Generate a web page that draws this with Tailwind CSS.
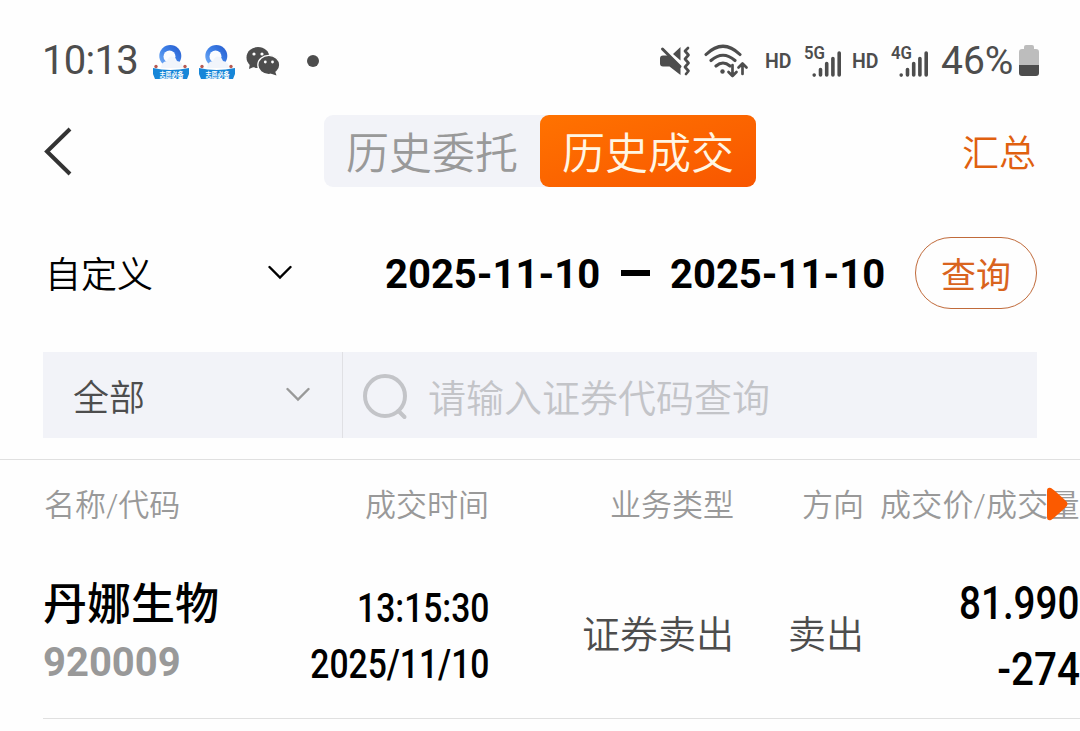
<!DOCTYPE html>
<html lang="zh-CN">
<head>
    <meta charset="UTF-8">
    <meta name="viewport" content="width=device-width, initial-scale=1.0">
    <title>历史成交</title>
    <script src="https://cdn.jsdelivr.net/npm/@tailwindcss/browser@4"></script>
</head>
<body class="w-[1080px] h-[731px] overflow-hidden bg-[#fefefe] text-black whitespace-nowrap font-[Roboto,'Noto_Sans_CJK_SC',sans-serif]">
    <!-- Status bar -->
    <div class="flex h-[100px] pt-[32px] text-[#4d4d4d]">
        <span class="ml-[42px] w-[110px] h-[56px] text-[40px] leading-[58px] tracking-[-0.7px]">10:13</span>
        <svg class="mt-[10px] w-[38px] h-[40px] shrink-0" viewBox="0 0 38 40">
            <defs>
                <linearGradient id="ring" x1="0" y1="1" x2="1" y2="0">
                    <stop offset="0" stop-color="#7db4f7"/>
                    <stop offset=".5" stop-color="#3f82e8"/>
                    <stop offset="1" stop-color="#2459cc"/>
                </linearGradient>
            </defs>
            <circle cx="18.300" cy="14" r="11" fill="url(#ring)"/>
            <circle cx="17.500" cy="14.500" r="6" fill="#fafcff"/>
            <path d="M9 26q0-6 6-7 2-6 7-4 2 1 3 4 6 1 6 7z" fill="#f1f5fb"/>
            <path d="M1 26q17 4 36 0v6l-2 5H3l-2-5z" fill="#1786d8"/>
            <circle cx="4" cy="24.500" r="1.700" fill="#b75a52"/>
            <circle cx="33" cy="24.500" r="1.700" fill="#b75a52"/>
            <text x="7.500" y="35.500" font-size="7.500" font-weight="700" fill="#fff" textLength="24" lengthAdjust="spacingAndGlyphs">志愿必备</text>
        </svg>
        <svg class="ml-[8px] mt-[10px] w-[38px] h-[40px] shrink-0" viewBox="0 0 38 40">
            <circle cx="18.300" cy="14" r="11" fill="url(#ring)"/>
            <circle cx="17.500" cy="14.500" r="6" fill="#fafcff"/>
            <path d="M9 26q0-6 6-7 2-6 7-4 2 1 3 4 6 1 6 7z" fill="#f1f5fb"/>
            <path d="M1 26q17 4 36 0v6l-2 5H3l-2-5z" fill="#1786d8"/>
            <circle cx="4" cy="24.500" r="1.700" fill="#b75a52"/>
            <circle cx="33" cy="24.500" r="1.700" fill="#b75a52"/>
            <text x="7.500" y="35.500" font-size="7.500" font-weight="700" fill="#fff" textLength="24" lengthAdjust="spacingAndGlyphs">志愿必备</text>
        </svg>
        <svg class="ml-[10px] mt-[14px] w-[34px] h-[31px] shrink-0" viewBox="0 0 34 31">
            <ellipse cx="12" cy="11.500" rx="11.500" ry="10.500" fill="#4d4d4d"/>
            <path d="M4 17l-1 6 7-3z" fill="#4d4d4d"/>
            <ellipse cx="22.800" cy="19" rx="11" ry="9.700" fill="#4d4d4d" stroke="#fefefe" stroke-width="1.300"/>
            <path d="M29 25l1.500 4.500-6-2z" fill="#4d4d4d"/>
            <circle cx="8" cy="8" r="1.600" fill="#fff"/><circle cx="16" cy="8" r="1.600" fill="#fff"/>
            <circle cx="19.300" cy="16" r="1.400" fill="#fff"/><circle cx="26.500" cy="16" r="1.400" fill="#fff"/>
        </svg>
        <span class="ml-[27px] mt-[23px] size-[12px] rounded-full bg-[#4d4d4d]"></span>

        <!-- Mute -->
        <svg class="ml-[341px] mt-[14px] w-[31px] h-[30px] shrink-0" viewBox="0 0 31 30" fill="#4d4d4d">
            <path d="M3 9.500H9L20.500 20v9L9.500 20.500H3q-3 0-3-3v-5q0-3 3-3zM13 8L20.500 1v13.500z"/>
            <path d="M2.500 3L20 20.500" fill="none" stroke="#4d4d4d" stroke-width="3" stroke-linecap="round"/>
            <path d="M28 2l-3 3 3.500 4-3.500 4 3.500 4-3.500 4 3.500 4-2.500 3" fill="none" stroke="#4d4d4d" stroke-width="2.700" stroke-linecap="round" stroke-linejoin="round"/>
        </svg>
        <!-- Wi-Fi -->
        <svg class="ml-[13px] mt-[11px] w-[45px] h-[35px] shrink-0" viewBox="0 0 45 35" fill="none" stroke="#4d4d4d" stroke-width="3.100" stroke-linecap="round" stroke-linejoin="round">
            <path d="M2 11.500Q19-5 36 11.500M7 17.500q12-10.500 24 0M12 23q7-6 14 0"/>
            <circle cx="18.500" cy="28.500" r="2.200" fill="#4d4d4d" stroke="none"/>
            <path d="M28.500 22v11m-4-4l4 4 4-4M38.500 31V20.500m-4 4l4-4 4 4" stroke-width="2.700"/>
        </svg>
        <span class="ml-[16px] mt-[17px] w-[39px] text-[19.500px] leading-[25px] font-semibold">HD</span>
        <svg class="mt-[10px] w-[38px] h-[36px] shrink-0" viewBox="0 0 38 36" stroke="#4d4d4d" stroke-width="3.600" stroke-linecap="round">
            <text x="0" y="16.500" font-size="18" font-weight="600" fill="#4d4d4d" stroke="none" textLength="21" lengthAdjust="spacingAndGlyphs">5G</text>
            <path d="M10.200 33v.1M16.500 27.500V33M22.700 21.500V33M28.900 16.500V33M35.200 11v22"/>
        </svg>
        <span class="ml-[10px] mt-[17px] w-[39px] text-[19.500px] leading-[25px] font-semibold">HD</span>
        <svg class="mt-[10px] w-[38px] h-[36px] shrink-0" viewBox="0 0 38 36" stroke="#4d4d4d" stroke-width="3.600" stroke-linecap="round">
            <text x="0" y="16.500" font-size="18" font-weight="600" fill="#4d4d4d" stroke="none" textLength="21" lengthAdjust="spacingAndGlyphs">4G</text>
            <path d="M10.200 33v.1M16.500 27.500V33M22.700 21.500V33M28.900 16.500V33M35.200 11v22"/>
        </svg>
        <span class="ml-[12px] w-[78px] h-[56px] text-[39px] leading-[59px]">46%</span>
        <svg class="mt-[13px] w-[20px] h-[32px] shrink-0" viewBox="0 0 20 32">
            <path d="M5 2q0-2 2-2h6q2 0 2 2v2h2q3 0 3 3v13H0V7q0-3 3-3h2z" fill="#bdbdbd"/>
            <path d="M0 20h20v8q0 3-3 3H3q-3 0-3-3z" fill="#4d4d4d"/>
        </svg>
    </div>

    <!-- Title bar -->
    <div class="flex h-[117px] pt-[15px] text-[43px]">
        <svg class="ml-[44px] mt-[12px] w-[28px] h-[49px] shrink-0" viewBox="0 0 28 49" fill="none" stroke="#333" stroke-width="4">
            <path d="M26 2L3 24.500 26 47"/>
        </svg>
        <div class="ml-[252px] flex h-[72px] w-[432px] rounded-[9px] bg-[#f2f3f8] leading-[78px] text-center font-[350]">
            <span class="w-[216px] text-[#999]">历史委托</span>
            <span class="h-[72px] w-[216px] rounded-[9px] bg-linear-to-br from-[#ff7200] to-[#f85600] text-[#fff6e4]">历史成交</span>
        </div>
        <span class="ml-[206px] text-[37px] leading-[80px] font-[350] text-[#e0600f]">汇总</span>
    </div>

    <!-- Date filter -->
    <div class="flex h-[135px] pt-[20px] leading-[79px]">
        <span class="ml-[45px] w-[223px] text-[36px] font-[350]">自定义</span>
        <svg class="mt-[28px] w-[24px] h-[15px] shrink-0" viewBox="0 0 24 15" fill="none" stroke="#000" stroke-width="2.400" stroke-linecap="round">
            <path d="M1.500 2L12 12.500 22.500 2"/>
        </svg>
        <span class="ml-[93px] w-[236px] text-[40px] leading-[76px] font-bold">2025-11-10</span>
        <span class="mt-[33px] w-[29px] h-[6px] bg-black"></span>
        <span class="ml-[20px] w-[245px] text-[40px] leading-[76px] font-bold">2025-11-10</span>
        <button class="w-[122px] h-[72px] rounded-full border border-[#c06a3a] text-[35px] leading-[77px] text-[#d9641e]">查询</button>
    </div>

    <!-- Search -->
    <div class="mx-[43px] flex h-[86px] bg-[#f2f3f8] leading-[94px]">
        <div class="flex w-[300px] border-r border-[#e0e0e4]">
            <span class="ml-[30px] w-[213px] text-[36px] font-[350] text-[#4d4d4d]">全部</span>
            <svg class="mt-[35px] w-[24px] h-[15px] shrink-0" viewBox="0 0 24 15" fill="none" stroke="#999" stroke-width="2.400" stroke-linecap="round">
                <path d="M1.500 2L12 12.500 22.500 2"/>
            </svg>
        </div>
        <svg class="ml-[20px] mt-[21px] w-[45px] h-[47px] shrink-0" viewBox="0 0 45 47" fill="none" stroke="#c3c4c8" stroke-width="4" stroke-linecap="round">
            <circle cx="22" cy="23" r="20"/>
            <path d="M35.500 38l6 6"/>
        </svg>
        <span class="ml-[20px] text-[38px] font-[350] text-[#c3c4c8]">请输入证券代码查询</span>
    </div>

    <!-- Table head -->
    <div class="relative mt-[21px] flex h-[90px] border-t border-[#e0e0e0] text-[31px] leading-[92px] font-[350] text-[#999]">
        <span class="ml-[44px] w-[189px]">名称/代码</span>
        <span class="w-[256px] text-right">成交时间</span>
        <span class="w-[245px] text-right">业务类型</span>
        <span class="w-[130px] text-right">方向</span>
        <span class="ml-[16px] tracking-[0.2px]">成交价/成交量</span>
        <svg class="absolute left-[1046px] top-[27px] w-[23px] h-[34px]" viewBox="0 0 23 34" fill="#fb5a00">
            <path d="M1 4q0-4 4-3 2 1 15 13 3 3 0 6Q7 32 5 33q-4 1-4-3z"/>
        </svg>
    </div>

    <!-- Trade row -->
    <div class="ml-[43px] flex h-[170px] border-b border-[#e0e0e0]">
        <div class="w-[190px] pt-[22px]">
            <div class="h-[64px] text-[44px] leading-[69px] font-medium">丹娜生物</div>
            <div class="text-[40px] leading-[56px] font-bold text-[#999]">920009</div>
        </div>
        <div class="flex w-[256px] flex-col items-end pt-[31px] text-[41px] leading-[56px] font-medium">
            <span class="origin-right scale-x-[0.82]">13:15:30</span>
            <span class="origin-right scale-x-[0.82]">2025/11/10</span>
        </div>
        <div class="w-[245px] pt-[58px] text-right text-[38px] leading-[56px] font-[350] text-[#4d4d4d]">证券卖出</div>
        <div class="w-[130px] pt-[58px] text-right text-[38px] leading-[56px] font-[350] text-[#4d4d4d]">卖出</div>
        <div class="flex w-[216px] flex-col items-end pt-[21px] text-[46px] leading-[66px] font-medium">
            <span class="origin-right scale-x-[0.84]">81.990</span>
            <span class="origin-right scale-x-[0.88]">-274</span>
        </div>
    </div>
</body>
</html>
